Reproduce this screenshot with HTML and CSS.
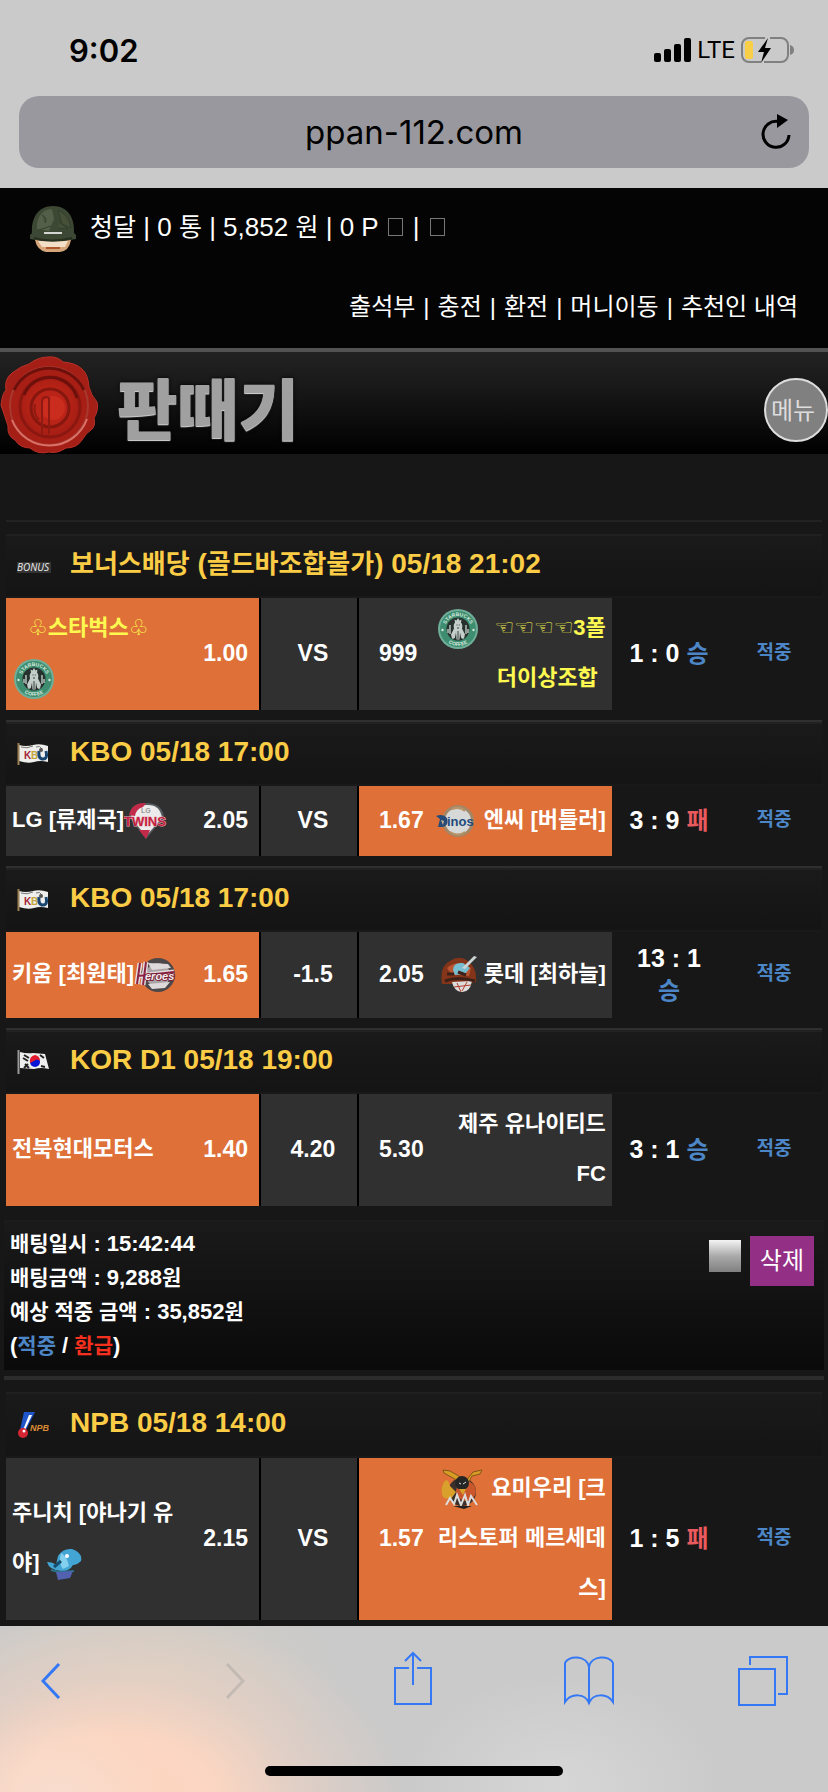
FILE: index.html
```html
<!DOCTYPE html>
<html lang="ko">
<head>
<meta charset="utf-8">
<meta name="viewport" content="width=device-width, initial-scale=1">
<title>판때기</title>
<link rel="stylesheet" href="styles.css">
</head>
<body>
<svg class="defs" aria-hidden="true">
  <defs>
    <symbol id="siren" viewBox="0 0 40 40">
      <circle cx="20" cy="20" r="20" fill="#6fae98"/>
      <circle cx="20" cy="20" r="18" fill="#3f8d70"/>
      <path id="arc-top" d="M7 20a13 13 0 0 1 26 0" fill="none"/>
      <path id="arc-bottom" d="M3 20a17 17 0 0 0 34 0" fill="none"/>
      <text class="ring"><textPath href="#arc-top" startOffset="50%">STARBUCKS</textPath></text>
      <text class="ring"><textPath href="#arc-bottom" startOffset="50%">COFFEE</textPath></text>
      <circle cx="4.500" cy="21" r="1.200" fill="#d4e8df"/><circle cx="35.500" cy="21" r="1.200" fill="#d4e8df"/>
      <circle cx="20" cy="20" r="11.500" fill="#26302d"/>
      <path d="M20 9l1.500 2.500 2-1-.5 3q2 2 1 6l3 6-1 4q-2 1-3-1l-1-5-.5 7h-3l-.5-7-1 5q-1 2-3 1l-1-4 3-6q-1-4 1-6l-.5-3 2 1z" fill="#c3cdc9"/>
      <path d="M12 16v9M28 16v9M10 20v4M30 20v4" stroke="#b5c0bc" stroke-width="1.500"/>
      <path d="M18.500 16h1M20.800 16h1M19 19h2M20 22v8" stroke="#37423e"/>
    </symbol>
    <symbol id="kbo" viewBox="0 0 32 22">
      <path d="M2 2q7 2 14 0t15 1v16q-8-2-14 0t-15-1z" fill="#eeeeec"/>
      <path d="M1.500 0v22" stroke="#9b8153" stroke-width="2"/>
      <path d="M4 4q6 2 12-1M19 4q4-2 6 2" fill="none" stroke="#777"/>
      <text x="7" y="16" class="flag-text" fill="#a52534">K</text>
      <text x="14" y="16" class="flag-text" fill="#c4a63c">B</text>
      <path d="M22 8q-1 8 4 8t3-8" fill="none" stroke="#17456f" stroke-width="3"/>
      <circle cx="24" cy="7" r="2" fill="#555"/>
    </symbol>
  </defs>
</svg>

<header class="browser">
  <div class="status">
    <time class="clock">9:02</time>
    <div class="signals">
      <svg width="38" height="24" viewBox="0 0 38 24" aria-hidden="true">
        <rect x="0" y="15" width="7" height="9" rx="2"/><rect x="10" y="11" width="7" height="13" rx="2"/><rect x="20" y="6" width="7" height="18" rx="2"/><rect x="30" y="0" width="7" height="24" rx="2"/>
      </svg>
      <span class="lte">LTE</span>
      <svg width="54" height="28" viewBox="0 0 54 28" aria-hidden="true">
        <path d="M25 2H9a7 7 0 0 0-7 7v10a7 7 0 0 0 7 7h12M30 2h11a7 7 0 0 1 7 7v10a7 7 0 0 1-7 7H24" fill="none" stroke="#808080" stroke-width="2"/>
        <rect x="5" y="5" width="8" height="18" rx="2" fill="#f8cf46"/>
        <path d="M50 9q4 1 4 5t-4 5z" fill="#808080"/>
        <path d="M28 2L18 16h6l-3 11 10-15h-6z"/>
      </svg>
    </div>
  </div>
  <div class="address">
    <span class="host">ppan-112.com</span>
    <button class="reload" aria-label="새로고침">
      <svg width="30" height="36" viewBox="0 0 30 36" aria-hidden="true"><path d="M17 7.500A13 13 0 1 0 28 21" fill="none" stroke="#000" stroke-width="3"/><path d="M16 0v14l11-8z"/></svg>
    </button>
  </div>
</header>

<section class="account">
  <div class="user">
    <svg width="46" height="46" viewBox="0 0 46 46" aria-hidden="true">
      <path d="M5 34h36q-2 11-11 12H16Q7 44 5 34z" fill="#d6a67b"/>
      <path d="M8 35h30l-3 6H12z" fill="#f3dfc7"/>
      <path d="M16 41h14v2H16z" fill="#b0562d"/>
      <path d="M2 27C1 11 9 0 23 0s22 11 21 27l2 2v4q-23 5-46 0v-4z" fill="#3d4834"/>
      <path d="M7 23C6 12 12 3 22 3l2 10-5 12z" fill="#535f49"/>
      <path d="M28 4q11 5 13 18l-9-4zM12 9q6 3 3 8M29 16l9 7-10-1M9 24l12-4" fill="#465039" stroke="#353e2d"/>
      <path d="M4 32q18 5 38 0" fill="none" stroke="#28311f" stroke-width="2"/>
      <path d="M14 26h18v2H14z" fill="#d2d5d2"/>
    </svg>
    <p class="balance"><span class="ko">청달</span> | 0 <span class="ko">통</span> | 5,852 <span class="ko">원</span> | 0 P <i class="blank"></i> | <i class="blank"></i></p>
  </div>
  <nav class="links">
    <a href="#">출석부</a><b>|</b><a href="#">충전</a><b>|</b><a href="#">환전</a><b>|</b><a href="#">머니이동</a><b>|</b><a href="#">추천인 내역</a>
  </nav>
</section>

<div class="masthead">
  <a class="brand" href="#">
    <svg width="98" height="98" viewBox="0 0 98 98" aria-hidden="true">
      <defs><radialGradient id="wax"><stop offset="0" stop-color="#cf2a1a"/><stop offset=".6" stop-color="#a81e14"/><stop offset="1" stop-color="#a31f17"/></radialGradient></defs>
      <path d="M48 1Q57 0 63 6Q76 7 82 13Q88 18 89 31Q91 39 97 46Q99 54 94 62Q96 70 91 74Q86 77 82 84Q77 92 66 92Q57 98 49 96Q38 99 30 92Q20 92 15 84Q7 80 8 70Q5 61 1 49Q2 38 6 34Q4 23 12 17Q21 10 29 8Q38 1 48 1z" fill="url(#wax)" stroke="#b93027"/>
      <circle cx="49" cy="50" r="39" fill="none" stroke="#a8392f" stroke-width="2"/>
      <path d="M14 34A39 39 0 0 1 84 34" fill="none" stroke="#6d100b" stroke-width="3"/>
      <path d="M12 64A40 40 0 0 0 87 63" fill="none" stroke="#d9736a" stroke-width="2"/>
      <circle cx="50" cy="51" r="30" fill="none" stroke="#8a1710" stroke-width="3"/>
      <path d="M24 39A28 28 0 0 1 77 42" fill="none" stroke="#6d100b" stroke-width="3"/>
      <circle cx="50" cy="52" r="19" fill="#b92318" stroke="#85170f" stroke-width="3"/>
      <circle cx="53" cy="52" r="12" fill="#ca2c1d"/>
      <path d="M42 78V45q1-6 7-3v36M39 64q-6-6-4-16" fill="none" stroke="#8f1a12" stroke-width="2"/>
    </svg>
    <span class="wordmark">판때기</span>
  </a>
  <button class="menu">메뉴</button>
</div>

<main class="slips">
  <article class="slip">
    <section class="game first">
      <h2><svg width="34" height="16" viewBox="0 0 34 16" aria-hidden="true"><rect y="4" width="34" height="11" fill="#343434"/><text x="0" y="13" class="bonus">BONUS</text></svg><span><span class="ko">보너스배당</span> (<span class="ko">골드바조합불가</span>) 05/18 21:02</span></h2>
      <table><tr>
        <td class="home pick"><div class="side"><span class="team gold club"><span class="suit">♧</span>스타벅스<span class="suit">♧</span><br><svg class="logo inset" width="40" height="40"><use href="#siren"/></svg></span><span>1.00</span></div></td>
        <td class="draw">VS</td>
        <td class="away"><div class="side"><span>999</span><span class="team gold"><svg class="logo spaced" width="40" height="40"><use href="#siren"/></svg> <span class="suit">☜☜☜☜</span><span class="num">3</span>폴<br><span class="tail">더이상조합</span></span></div></td>
        <td class="score">1 : 0 <em class="win">승</em></td>
        <td class="hit">적중</td>
      </tr></table>
    </section>

    <section class="game">
      <h2><svg width="32" height="22" aria-hidden="true"><use href="#kbo"/></svg><span>KBO 05/18 17:00</span></h2>
      <table><tr>
        <td class="home"><div class="side"><span class="team"><span class="num">LG [</span>류제국<span class="num">]</span><svg class="logo" width="44" height="38" viewBox="0 0 44 38" aria-hidden="true"><path d="M5 15Q6 1 22 1t18 14L22 37z" fill="#555b60"/><path d="M7 16Q8 4 22 3t16 13L22 34z" fill="#eceaea"/><path d="M5 13Q8 0 22 1l-3 4q-7 2-8 9zM15 28l7 9 4-9z" fill="#c12a48"/><text x="17" y="11" class="tiny" fill="#999">LG</text><text x="0" y="24" class="patch" fill="#c41e40" stroke="#e8b5bd">TWINS</text></svg></span><span>2.05</span></div></td>
        <td class="draw">VS</td>
        <td class="away pick"><div class="side"><span>1.67</span><span class="team"><svg class="logo" width="42" height="34" viewBox="0 0 42 34" aria-hidden="true"><circle cx="22" cy="17" r="16" fill="#a38767"/><circle cx="22" cy="17" r="13" fill="#d7d8d8"/><path d="M16 5q8-3 13 2M14 28q8 5 15 0" fill="none" stroke="#b89468" stroke-width="2"/><path d="M0 12q7-3 11 2 3 10-9 9l2-8z" fill="#254b78"/><path d="M5 16l3 1-1 4z" fill="#ceb28b"/><text x="11" y="22" class="patch" fill="#214a7a">inos</text></svg> 엔씨 <span class="num">[</span>버틀러<span class="num">]</span></span></div></td>
        <td class="score">3 : 9 <em class="loss">패</em></td>
        <td class="hit">적중</td>
      </tr></table>
    </section>

    <section class="game">
      <h2><svg width="32" height="22" aria-hidden="true"><use href="#kbo"/></svg><span>KBO 05/18 17:00</span></h2>
      <table><tr>
        <td class="home pick"><div class="side"><span class="team">키움 <span class="num">[</span>최원태<span class="num">]</span><svg class="logo" width="44" height="36" viewBox="0 0 44 36" aria-hidden="true"><circle cx="24" cy="18" r="17" fill="#4d4849"/><circle cx="24" cy="18" r="12" fill="#aaa4a6"/><path d="M14 6l20 1 3 4-19 2zM14 27l22-2-5 6-13 1z" fill="#ded9da"/><path d="M6 6L3 27M12 5L9 28M4 19l36-4" stroke="#e3dcde" stroke-width="5"/><path d="M6 6L3 27M12 5L9 28M4 19l36-4" stroke="#8d2343" stroke-width="2"/><text x="11" y="23" class="eroes">eroes</text></svg></span><span>1.65</span></div></td>
        <td class="draw">-1.5</td>
        <td class="away"><div class="side"><span>2.05</span><span class="team"><svg class="logo" width="38" height="38" viewBox="0 0 38 38" aria-hidden="true"><path d="M2 28Q-1 10 10 5q10-7 19 1 8 6 7 20l-9 2z" fill="#843419"/><path d="M7 12q9-9 24 0l-2 8-18-2z" fill="#b95431"/><path d="M13 14q0-8 10-7l7 5-5 6-10 1z" fill="#77bed0"/><path d="M22 12L34 0l3 1-12 12z" fill="#cbd4d5"/><path d="M12 26l20-1q-2 12-11 11-7-1-9-10z" fill="#ddd"/><path d="M14 31l17-2M17 27l4 9M27 26l-5 9" stroke="#b13c2b"/><path d="M7 18h7M18 16l8 3M5 25q13-5 30 0" stroke="#3d2018" stroke-width="3" fill="none"/></svg> 롯데 <span class="num">[</span>최하늘<span class="num">]</span></span></div></td>
        <td class="score">13 : 1<br><em class="win">승</em></td>
        <td class="hit">적중</td>
      </tr></table>
    </section>

    <section class="game">
      <h2><svg width="32" height="24" viewBox="0 0 32 24" aria-hidden="true"><path d="M3 2q7 2 13 1l12 1 4 15q-8-2-15 0L3 18z" fill="#eee"/><path d="M1.500 0v24" stroke="#999" stroke-width="2"/><circle cx="18" cy="12" r="5" fill="#0713d5"/><path d="M13 13q-1-7 5-8 5 1 5 6-3-3-6 0z" fill="#e31b2d"/><path d="M7 5l5 3M6 8l5 3M8 14l4 4M11 14l-4 4M23 5l4 3M24 16l4 1" stroke="#222" stroke-width="2"/></svg><span>KOR D1 05/18 19:00</span></h2>
      <table><tr>
        <td class="home pick"><div class="side"><span class="team">전북현대모터스</span><span>1.40</span></div></td>
        <td class="draw">4.20</td>
        <td class="away"><div class="side"><span>5.30</span><span class="team">제주 유나이티드<br><span class="num">FC</span></span></div></td>
        <td class="score">3 : 1 <em class="win">승</em></td>
        <td class="hit">적중</td>
      </tr></table>
    </section>

    <footer class="summary">
      <div class="details">
        <p><span class="ko">배팅일시</span> : 15:42:44</p>
        <p><span class="ko">배팅금액</span> : 9,288<span class="ko">원</span></p>
        <p><span class="ko">예상 적중 금액</span> : 35,852<span class="ko">원</span></p>
        <p>(<span class="ko win">적중</span> / <span class="ko refund">환급</span>)</p>
      </div>
      <input type="checkbox" class="tick" aria-label="배팅 선택">
      <button class="delete">삭제</button>
    </footer>
  </article>

  <article class="slip next">
    <section class="game first">
      <h2><svg width="32" height="28" viewBox="0 0 32 28" aria-hidden="true"><path d="M7 1h11l-9 18H3z" fill="#1f57cb"/><path d="M12 4h3L8 19H6z" fill="#fff"/><circle cx="6" cy="22" r="5" fill="#d32532"/><circle cx="7" cy="20" r="1.500" fill="#fff"/><text x="13" y="20" class="npb">NPB</text></svg><span>NPB 05/18 14:00</span></h2>
      <table><tr>
        <td class="home"><div class="side"><span class="team">주니치 <span class="num">[</span>야나기 유<br>야<span class="num">]</span> <svg class="logo" width="36" height="32" viewBox="0 0 36 32" aria-hidden="true"><path d="M1 14q6 0 9 3l2-9q5-8 14-7 11 4 9 12-4 4-8 4-4 7-12 6Q3 22 1 14z" fill="#43a5d4"/><path d="M15 5q6 3 8 13l-6 3q-5-6-2-16z" fill="#82d0ee"/><circle cx="21" cy="8" r="2" fill="#fff"/><path d="M8 19l7-6" stroke="#164e70" stroke-width="3"/><path d="M5 22l8 2 15-1" stroke="#267386" stroke-width="2" fill="none"/><path d="M10 24l17-1-3 7-12 2z" fill="#5261b0"/></svg></span><span>2.15</span></div></td>
        <td class="draw">VS</td>
        <td class="away pick"><div class="side"><span>1.57</span><span class="team"><svg class="logo spaced-s" width="42" height="40" viewBox="0 0 42 40" aria-hidden="true"><circle cx="21" cy="23" r="14" fill="#3b302b"/><circle cx="25" cy="22" r="10" fill="#ca572b"/><path d="M19 13L3 4 2 1l7 1 14 8M24 13l8-10 9-2-2 4-8 2-5 9" fill="#d79c24" stroke="#85561b"/><circle cx="21" cy="14" r="7" fill="#252525"/><path d="M18 14l2 1M22 15l3-2" stroke="#ddd"/><path d="M3 13q4-5 6 4l6 6-5 7-7-1q-5-6 0-16zM18 20h7l-3 6z" fill="#daa02c"/><path d="M5 36l4-7 4 6 3-9 4 10 4-10 3 10 3-9 6 9" fill="none" stroke="#ddd" stroke-width="2"/><path d="M12 37h19l-8 3z" fill="#222"/></svg> 요미우리 <span class="num">[</span>크<br>리스토퍼 메르세데<br>스<span class="num">]</span></span></div></td>
        <td class="score">1 : 5 <em class="loss">패</em></td>
        <td class="hit">적중</td>
      </tr></table>
    </section>
  </article>
</main>

<nav class="toolbar" aria-label="브라우저">
  <div class="actions">
    <button class="back" aria-label="뒤로"><svg width="20" height="36" viewBox="0 0 20 36"><path d="M18 1L2 18l16 17" stroke-width="3"/></svg></button>
    <button class="forward" aria-label="앞으로" disabled><svg width="20" height="36" viewBox="0 0 20 36"><path d="M2 1l16 17L2 35" stroke-width="3"/></svg></button>
    <button class="share" aria-label="공유"><svg width="38" height="54" viewBox="0 0 38 54"><path d="M15 17H1v36h36V17H23M19 34V2M11 10l8-8 8 8" stroke-width="2"/></svg></button>
    <button aria-label="책갈피"><svg width="50" height="50" viewBox="0 0 50 50"><path d="M25 11C23-1 4-1 1 7v39c6-9 20-9 24 1 4-10 18-10 24-1V7C46-1 27-1 25 11v37" stroke-width="2"/></svg></button>
    <button aria-label="탭"><svg width="50" height="50" viewBox="0 0 50 50"><path d="M1 13h36v36H1zM12 9V1h37v37h-9" stroke-width="2"/></svg></button>
  </div>
  <div class="indicator"></div>
</nav>
</body>
</html>
```
FILE: styles.css
```css
* { box-sizing: border-box; }

body {
  margin: 0;
  min-height: 100vh;
  display: flex;
  flex-direction: column;
  background: #171717;
  color: #fff;
  font-family: "Liberation Sans", "Noto Sans CJK KR", sans-serif;
}

p, h2 { margin: 0; }
a { color: inherit; text-decoration: none; }
button { padding: 0; border: 0; background: none; color: inherit; font-family: inherit; }
em, i { font-style: normal; }
.defs { position: absolute; width: 0; height: 0; }

/* browser chrome */
.browser { background: #cacaca; color: #000; padding-bottom: 20px; }
.status {
  height: 96px;
  padding: 4px 34px 0 69px;
  display: flex;
  align-items: center;
  justify-content: space-between;
  font-family: Inter, sans-serif;
}
.clock { font-size: 31px; font-weight: 600; }
.signals { display: flex; align-items: center; gap: 5px; }
.lte { font-family: Roboto, sans-serif; font-size: 24px; }
.address {
  height: 72px;
  margin: 0 19px;
  padding: 0 18px 0 48px;
  border-radius: 20px;
  background: #98989e;
  display: flex;
  align-items: center;
  font-family: Inter, sans-serif;
  font-size: 33px;
}
.host { flex: 1; text-align: center; }
.reload { display: flex; }

/* account strip */
.account { background: #040404; height: 160px; padding: 18px 30px 0; }
.user { display: flex; align-items: center; gap: 14px; }
.balance { font-size: 26px; line-height: 40px; padding-bottom: 4px; }
.balance .ko { font-size: 25px; }
.blank { display: inline-block; width: 15px; height: 18px; margin: 0 2px 0 3px; border: 1px solid #777; }
.links { display: flex; justify-content: flex-end; gap: 8px; font-size: 24px; line-height: 36px; padding-top: 37px; }
.links b { font-weight: 400; }

.masthead {
  height: 106px;
  display: flex;
  align-items: center;
  justify-content: space-between;
  background: linear-gradient(#222, #1a1a1a 30%, #000);
  border-top: 4px solid #525252;
}
.brand { display: flex; align-items: center; gap: 19px; padding-top: 4px; }
.wordmark {
  font-family: "Noto Sans CJK KR", sans-serif;
  font-size: 66px;
  font-weight: 900;
  line-height: 94px;
  color: #a0a0a0;
  text-shadow: 0 1px 1px #ddd, 0 0 4px #000;
}
.menu {
  width: 64px;
  height: 64px;
  margin-top: 14px;
  padding: 0 6px 4px 0;
  border: 2px solid #ddd;
  border-radius: 50%;
  background: #808080;
  color: #ddd;
  font-size: 24px;
}

/* betting slips */
.slips { flex: 1; padding: 66px 6px 6px; }
.slip { border-top: 2px solid #222; padding-top: 12px; }
.slip.next { margin: 6px -2px 0; padding: 12px 2px 0; border-top: 4px solid #2c2c2c; }
.game { border-top: 2px solid #2f2f2f; padding-bottom: 10px; }
.game.first { border-top: 2px solid #202020; }
.slip.next .game { padding-bottom: 0; }

.game h2 {
  height: 64px;
  padding: 0 0 4px 10px;
  display: grid;
  grid-template-columns: 40px 1fr;
  gap: 14px;
  align-items: center;
  background: linear-gradient(#1a1a1a, #141414);
  border-top: 2px solid #212121;
  border-bottom: 2px solid #191919;
  color: #fbcc45;
  font-size: 28px;
  line-height: 40px;
}
.game.first h2 { border-top: 0; height: 62px; }
.slip.next .game.first h2 { height: 64px; }
.game h2 svg { margin: 4px 0 0 1px; }
.game h2 .ko { font-size: 26px; }
.bonus { font: italic 10px "Open Sans", sans-serif; fill: #eee; }
.flag-text { font: 700 10px "Liberation Sans", sans-serif; }
.npb { font: italic 700 9px "Liberation Sans", sans-serif; fill: #d98b34; }
.ring { font: 700 5px "Liberation Sans", sans-serif; fill: #d4e8df; text-anchor: middle; }
.tiny { font: 700 7px "Liberation Sans", sans-serif; }
.patch { font: 700 13px "Liberation Sans", sans-serif; stroke-width: 1px; paint-order: stroke; }
.eroes { font: italic 700 11px "Liberation Sans", sans-serif; fill: #f4eef0; stroke: #7b2238; stroke-width: 2px; paint-order: stroke; }

table { width: 100%; table-layout: fixed; border-collapse: separate; border-spacing: 0; }
tr { height: 70px; }
td { padding: 0 0 2px; font-size: 23px; font-weight: 700; line-height: 50px; }
.home { width: 31.25%; padding: 0; background: #303030; border-right: 2px solid #000; }
.draw { width: 12%; background: #303030; border-right: 2px solid #000; text-align: center; padding-left: 8px; }
.away { width: 31%; padding: 0; background: #303030; }
.pick { background: #de7038; }
.side { display: flex; align-items: center; justify-content: space-between; padding: 5px 11px 7px 6px; white-space: nowrap; }
.away .side { padding: 5px 6px 7px 20px; }
.away .team { text-align: right; }
.team, .num { font-size: 22px; }
.logo { display: inline-block; vertical-align: middle; margin: -6px 0; }
.inset { margin-left: 2px; }
.gold { color: #fdf950; }
.suit { font-family: "DejaVu Sans", sans-serif; font-size: 22px; font-weight: 400; line-height: 20px; }
.club .suit:first-child { margin-left: 16px; }
.spaced { margin-right: 10px; }
.spaced-s { margin-right: 2px; }
.tail { margin-right: 8px; }
.score { width: 14%; padding: 10px 0 12px; text-align: center; font-size: 25px; line-height: 32px; }
.score em { font-size: 24px; line-height: 30px; }
.hit { text-align: center; font-size: 19px; color: #4d86c6; }
.win { color: #4d86c6; }
.loss { color: #e85a5e; }
.refund { color: #f5301e; }

.summary {
  margin: 4px -2px 0;
  padding: 5px 10px 7px 6px;
  display: flex;
  align-items: flex-start;
  gap: 9px;
  border-top: 2px solid #1c1c1c;
  background: linear-gradient(#1a1a1a, #0a0a0a);
  font-size: 22px;
  font-weight: 700;
  line-height: 34px;
}
.details { flex: 1; }
.summary .ko { font-size: 21px; }
.summary p { height: 34px; }
.tick { appearance: none; width: 32px; height: 32px; margin: 13px 0 0; background: linear-gradient(#f4f4f4, #aaa 50%, #808080); }
.delete { height: 50px; padding: 0 10px 6px; margin-top: 9px; background: #932f85; font-size: 24px; }

/* bottom toolbar */
.toolbar {
  height: 166px;
  background:
    radial-gradient(ellipse 110px 90px at 7% 108%, #f8ddcf, #f8ddcf00),
    radial-gradient(ellipse 290px 190px at 14% 106%, #fdd5bf 0, #fbd6c2 35%, #ecd1c399 65%, #cacaca00),
    radial-gradient(ellipse 190px 110px at 18% 30%, #d6cec3, #d6cec300),
    radial-gradient(ellipse 160px 110px at 68% 95%, #d6d6d6, #cacaca00),
    #cacaca;
}
.actions { height: 102px; padding: 8px 40px 0 18px; display: flex; align-items: center; justify-content: space-between; }
.actions button { width: 50px; height: 60px; display: flex; align-items: center; justify-content: center; }
.actions .back { width: 66px; }
.actions .forward, .actions .share { width: 54px; }
.actions .share { padding-bottom: 6px; }
.actions svg { fill: none; stroke: #3478f6; }
.actions .forward svg { stroke: #c4bab4; }
.indicator { width: 36%; height: 10px; margin: 38px auto 0; border-radius: 5px; background: #000; }
```
